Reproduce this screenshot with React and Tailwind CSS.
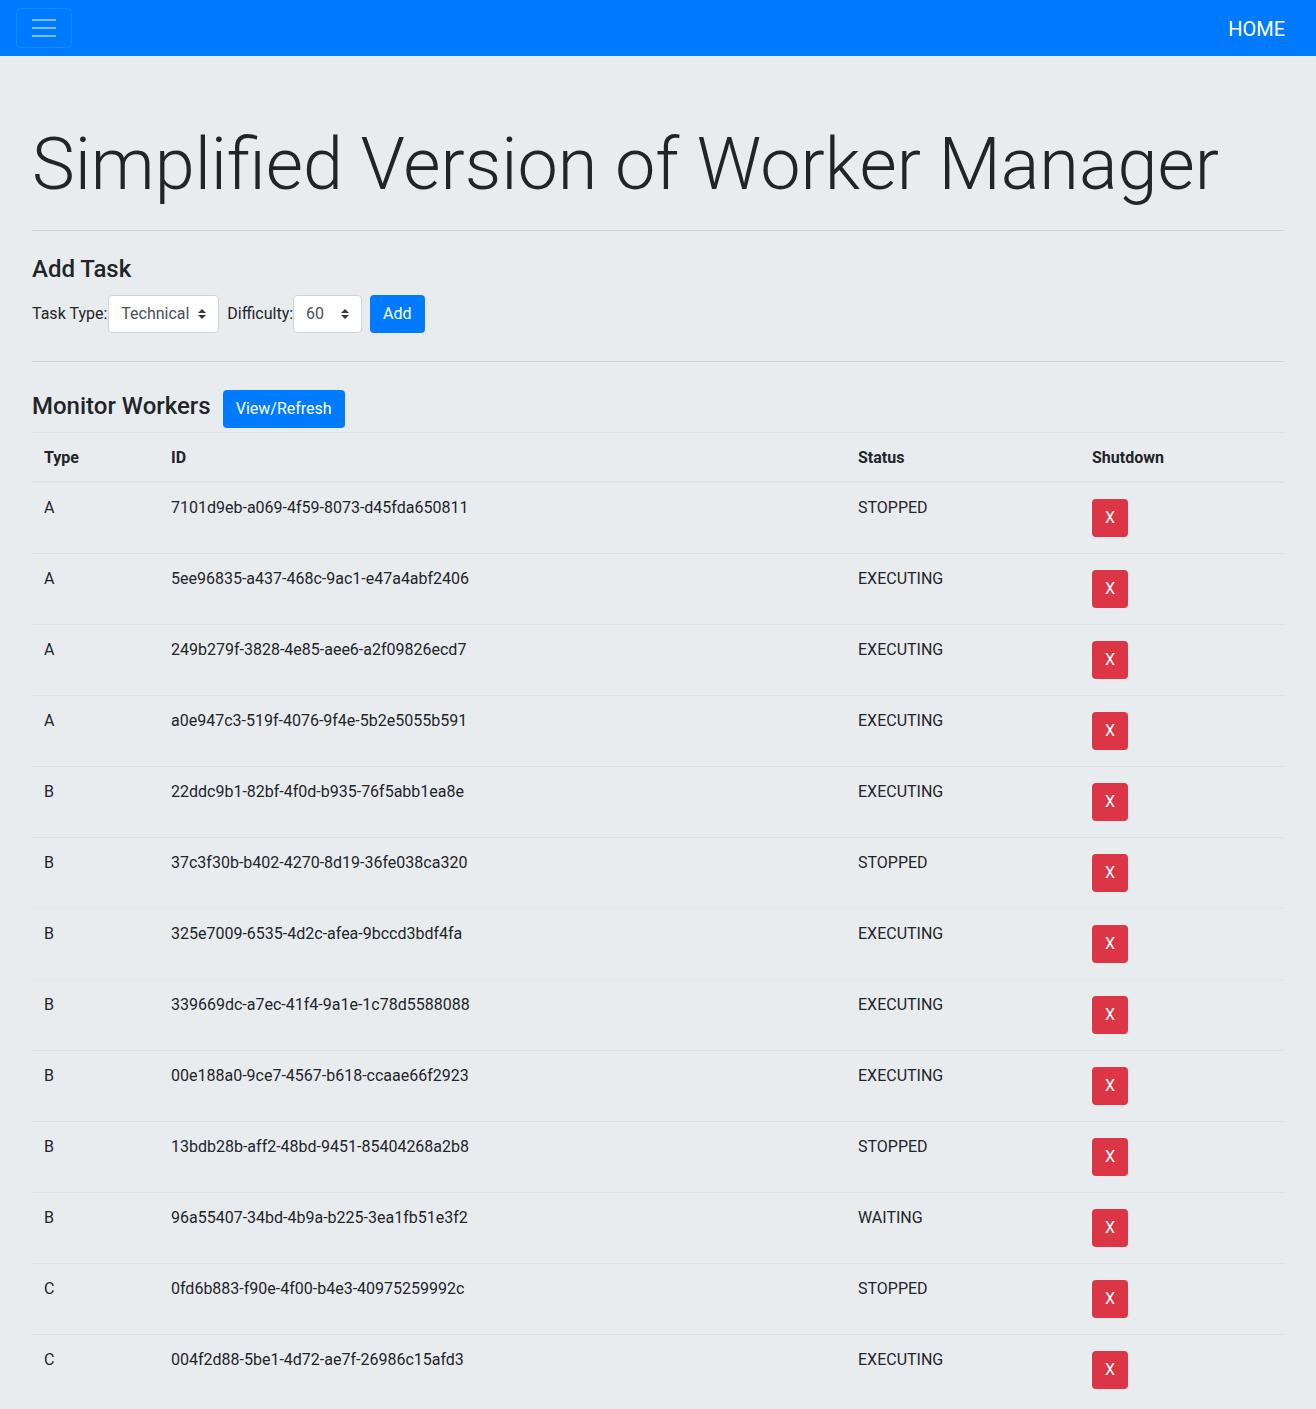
const workers = [
  ['A', '7101d9eb-a069-4f59-8073-d45fda650811', 'STOPPED'],
  ['A', '5ee96835-a437-468c-9ac1-e47a4abf2406', 'EXECUTING'],
  ['A', '249b279f-3828-4e85-aee6-a2f09826ecd7', 'EXECUTING'],
  ['A', 'a0e947c3-519f-4076-9f4e-5b2e5055b591', 'EXECUTING'],
  ['B', '22ddc9b1-82bf-4f0d-b935-76f5abb1ea8e', 'EXECUTING'],
  ['B', '37c3f30b-b402-4270-8d19-36fe038ca320', 'STOPPED'],
  ['B', '325e7009-6535-4d2c-afea-9bccd3bdf4fa', 'EXECUTING'],
  ['B', '339669dc-a7ec-41f4-9a1e-1c78d5588088', 'EXECUTING'],
  ['B', '00e188a0-9ce7-4567-b618-ccaae66f2923', 'EXECUTING'],
  ['B', '13bdb28b-aff2-48bd-9451-85404268a2b8', 'STOPPED'],
  ['B', '96a55407-34bd-4b9a-b225-3ea1fb51e3f2', 'WAITING'],
  ['C', '0fd6b883-f90e-4f00-b4e3-40975259992c', 'STOPPED'],
  ['C', '004f2d88-5be1-4d72-ae7f-26986c15afd3', 'EXECUTING'],
];

function Arrows() {
  return (
    <svg width="8" height="10" viewBox="0 0 8 10" className="ml-auto">
      <path d="M4 0 L8 4 H0 Z M0 6 H8 L4 10 Z" fill="#343a40" />
    </svg>
  );
}

function FakeSelect({ value, width }) {
  return (
    <div
      className={`flex items-center h-[38px] bg-white border border-[#ced4da] rounded pl-3 pr-3 text-[#495057] ${width}`}
    >
      <span>{value}</span>
      <Arrows />
    </div>
  );
}

export default function App() {
  return (
    <div
      className="min-h-screen bg-[#e9ecef] text-[#212529] text-base"
      style={{ fontFamily: 'Roboto, "Liberation Sans", sans-serif' }}
    >
      <nav className="h-14 bg-[#007bff] flex items-center justify-between pl-4 pr-[31px]">
        <button className="w-14 h-10 border border-white/10 rounded flex flex-col items-center justify-center gap-[6px]">
          <span className="block w-6 h-[2px] bg-white/50" />
          <span className="block w-6 h-[2px] bg-white/50" />
          <span className="block w-6 h-[2px] bg-white/50" />
        </button>
        <a className="text-white text-xl mt-[2px]">HOME</a>
      </nav>

      <div className="px-8 pt-[66px] pb-1">
        <h1 className="text-[72px] leading-[1.2] font-light">Simplified Version of Worker Manager</h1>
        <hr className="mt-[22px] mb-6 border-black/10" />

        <h4 className="text-2xl font-medium leading-[1.2] mb-[11px]">Add Task</h4>
        <div className="flex items-center">
          <label>Task Type:</label>
          <FakeSelect value="Technical" width="w-[111px] ml-px" />
          <label className="ml-2">Difficulty:</label>
          <FakeSelect value="60" width="w-[69px]" />
          <button className="ml-2 h-[38px] px-[13px] bg-[#007bff] text-white rounded">Add</button>
        </div>

        <hr className="mt-[28px] mb-[28px] border-black/10" />

        <div className="flex items-center gap-3">
          <h4 className="text-2xl font-medium leading-[1.2] mb-[6px]">Monitor Workers</h4>
          <button className="h-[38px] px-[13px] bg-[#007bff] text-white rounded">View/Refresh</button>
        </div>

        <div className="mt-1">
          <div className="grid grid-cols-[127px_687px_234px_1fr] border-t border-b-2 border-[#dee2e6] font-bold">
            <div className="px-3 pt-[13px] pb-[11px]">Type</div>
            <div className="px-3 pt-[13px] pb-[11px]">ID</div>
            <div className="px-3 pt-[13px] pb-[11px]">Status</div>
            <div className="px-3 pt-[13px] pb-[11px]">Shutdown</div>
          </div>
          {workers.map(([type, id, status], i) => (
            <div
              key={id}
              className={`grid grid-cols-[127px_687px_234px_1fr] ${i > 0 ? 'border-t border-[#dee2e6]' : ''}`}
            >
              <div className="px-3 pt-[13px] pb-[11px]">{type}</div>
              <div className="px-3 pt-[13px] pb-[11px]">{id}</div>
              <div className="px-3 pt-[13px] pb-[11px]">{status}</div>
              <div className="p-3">
                <button className="my-1 w-9 h-[38px] bg-[#dc3545] text-white rounded">X</button>
              </div>
            </div>
          ))}
        </div>
      </div>
    </div>
  );
}
